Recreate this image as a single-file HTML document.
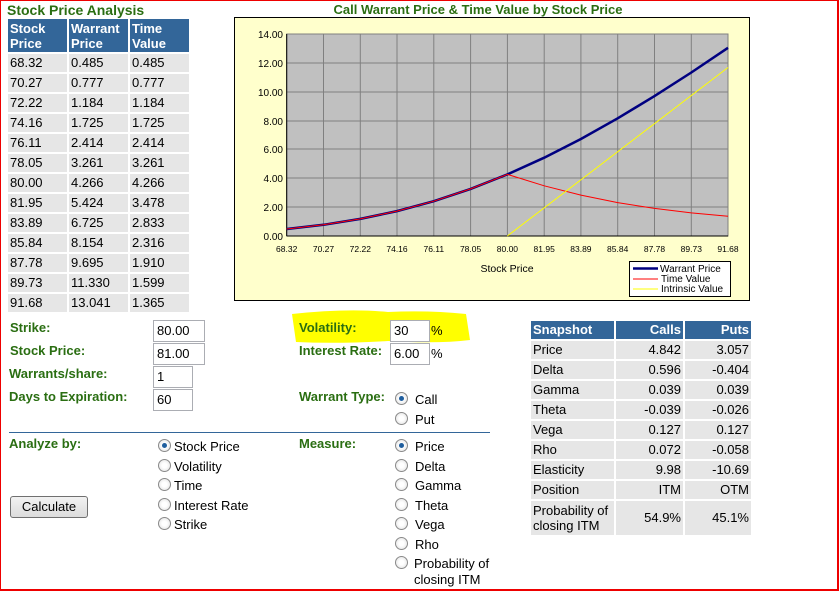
<!DOCTYPE html>
<html><head><meta charset="utf-8"><style>
*{margin:0;padding:0;box-sizing:border-box}
body{width:840px;height:591px;background:#fff;font-family:"Liberation Sans",Arial,sans-serif;font-size:13px;color:#000;position:relative;overflow:hidden}
.frame{position:absolute;left:0;top:0;width:839px;height:591px;border:1px solid #e00;border-right:2px solid #e00;border-bottom:2px solid #e00}
.a{position:absolute;white-space:nowrap}
.g{color:#2a6e12;font-weight:bold;font-size:13px}
.h{background:#336699;color:#fff;font-weight:bold;font-size:13px;line-height:15px;padding:2px 2px}
.c{background:#e6e6e6;font-size:13px;line-height:18px;padding-left:2px}
.inp{position:absolute;border:1px solid #abadb3;background:#fff;height:22px;font-size:13px;line-height:20px;padding-left:3px}
.rad{position:absolute;width:13px;height:13px;border-radius:50%;border:1px solid #8a8a8a;background:radial-gradient(circle,#fff 30%,#ddd 100%)}
.rad.on::after{content:"";position:absolute;left:3px;top:3px;width:5px;height:5px;border-radius:50%;background:#1f5e9e}
.r{text-align:right;padding-right:2px;padding-left:0}
</style></head><body>
<div class="frame"></div>
<div class="a g" style="left:7px;top:2px;font-size:14px">Stock Price Analysis</div>
<div class="a h" style="left:8px;top:19px;width:59px;height:33px">Stock<br>Price</div>
<div class="a h" style="left:69px;top:19px;width:59px;height:33px">Warrant<br>Price</div>
<div class="a h" style="left:130px;top:19px;width:59px;height:33px">Time<br>Value</div>
<div id="rows"></div>

<svg class="a" style="left:230px;top:0" width="524" height="305">
<text x="248" y="14" text-anchor="middle" font-family="Liberation Sans" font-weight="bold" font-size="13" fill="#2a6e12">Call Warrant Price &amp; Time Value by Stock Price</text>
<rect x="4.5" y="17.5" width="515" height="283" fill="#ffffcc" stroke="#000"/>
<rect x="56.7" y="34" width="441.3" height="202" fill="#c0c0c0" stroke="#808080"/>
<g stroke="#808080" stroke-width="1">
<line x1="56.7" y1="63" x2="498" y2="63"/><line x1="56.7" y1="92" x2="498" y2="92"/><line x1="56.7" y1="121" x2="498" y2="121"/><line x1="56.7" y1="149" x2="498" y2="149"/><line x1="56.7" y1="178" x2="498" y2="178"/><line x1="56.7" y1="207" x2="498" y2="207"/>
<line x1="93.5" y1="34" x2="93.5" y2="236"/><line x1="130.3" y1="34" x2="130.3" y2="236"/><line x1="167" y1="34" x2="167" y2="236"/><line x1="203.8" y1="34" x2="203.8" y2="236"/><line x1="240.6" y1="34" x2="240.6" y2="236"/><line x1="277.4" y1="34" x2="277.4" y2="236"/><line x1="314.2" y1="34" x2="314.2" y2="236"/><line x1="350.9" y1="34" x2="350.9" y2="236"/><line x1="387.7" y1="34" x2="387.7" y2="236"/><line x1="424.5" y1="34" x2="424.5" y2="236"/><line x1="461.3" y1="34" x2="461.3" y2="236"/>
</g>
<line x1="56.7" y1="34" x2="56.7" y2="236" stroke="#000"/><line x1="56.7" y1="236" x2="498" y2="236" stroke="#000"/>
<g font-family="Liberation Sans" font-size="10" text-anchor="end">
<text x="53" y="38">14.00</text><text x="53" y="67">12.00</text><text x="53" y="96">10.00</text><text x="53" y="125">8.00</text><text x="53" y="153">6.00</text><text x="53" y="182">4.00</text><text x="53" y="211">2.00</text><text x="53" y="240">0.00</text>
</g>
<g font-family="Liberation Sans" font-size="8.5" text-anchor="middle">
<text x="56.7" y="252">68.32</text><text x="93.5" y="252">70.27</text><text x="130.3" y="252">72.22</text><text x="167" y="252">74.16</text><text x="203.8" y="252">76.11</text><text x="240.6" y="252">78.05</text><text x="277.4" y="252">80.00</text><text x="314.2" y="252">81.95</text><text x="350.9" y="252">83.89</text><text x="387.7" y="252">85.84</text><text x="424.5" y="252">87.78</text><text x="461.3" y="252">89.73</text><text x="498" y="252">91.68</text>
</g>
<text x="277" y="272" text-anchor="middle" font-family="Liberation Sans" font-size="10.5">Stock Price</text>
<polyline fill="none" stroke="#000080" stroke-width="2.5" points="56.7,229 93.5,224.8 130.3,218.9 167,211.1 203.8,201.2 240.6,188.9 277.4,174.4 314.2,157.7 350.9,139 387.7,118.3 424.5,96.1 461.3,72.5 498,47.8"/>
<polyline fill="none" stroke="#ff0000" stroke-width="1" points="56.7,229 93.5,224.8 130.3,218.9 167,211.1 203.8,201.2 240.6,188.9 277.4,174.4 314.2,185.8 350.9,195.1 387.7,202.6 424.5,208.4 461.3,212.9 498,216.3"/>
<polyline fill="none" stroke="#ffff00" stroke-width="1" points="277.4,236 498,67.5"/>
<rect x="399.5" y="261.5" width="101" height="35" fill="#fff" stroke="#000"/>
<line x1="403" y1="268.5" x2="428" y2="268.5" stroke="#000080" stroke-width="2.5"/>
<line x1="403" y1="279" x2="428" y2="279" stroke="#f00"/>
<line x1="403" y1="289" x2="428" y2="289" stroke="#ff0"/>
<g font-family="Liberation Sans" font-size="10"><text x="430" y="272">Warrant Price</text><text x="431" y="282">Time Value</text><text x="431" y="292">Intrinsic Value</text></g>
</svg>

<svg class="a" style="left:288px;top:310px" width="185" height="36"><path d="M4 4 Q60 -2 100 2 Q140 0 178 4 L182 30 Q150 34 100 31 Q50 34 8 32 Z" fill="#ffff00"/></svg>

<div class="a g" style="left:10px;top:320px">Strike:</div>
<div class="a g" style="left:10px;top:343px">Stock Price:</div>
<div class="a g" style="left:9px;top:366px">Warrants/share:</div>
<div class="a g" style="left:9px;top:389px">Days to Expiration:</div>
<div class="inp" style="left:153px;top:320px;width:52px">80.00</div>
<div class="inp" style="left:153px;top:343px;width:52px">81.00</div>
<div class="inp" style="left:153px;top:366px;width:40px">1</div>
<div class="inp" style="left:153px;top:389px;width:40px">60</div>
<div class="a g" style="left:299px;top:320px">Volatility:</div>
<div class="a g" style="left:299px;top:343px">Interest Rate:</div>
<div class="inp" style="left:390px;top:320px;width:40px">30</div>
<div class="inp" style="left:390px;top:343px;width:40px">6.00</div>
<div class="a" style="left:431px;top:323px">%</div>
<div class="a" style="left:431px;top:346px">%</div>
<div class="a g" style="left:299px;top:389px">Warrant Type:</div>
<div class="rad on" style="left:395px;top:392px"></div><div class="a" style="left:415px;top:392px">Call</div>
<div class="rad" style="left:395px;top:412px"></div><div class="a" style="left:415px;top:412px">Put</div>
<div class="a" style="left:9px;top:432px;width:481px;height:1px;background:#336699"></div>
<div class="a g" style="left:9px;top:436px">Analyze by:</div>
<div class="rad on" style="left:158px;top:439px"></div><div class="a" style="left:174px;top:439px">Stock Price</div>
<div class="rad" style="left:158px;top:459px"></div><div class="a" style="left:174px;top:459px">Volatility</div>
<div class="rad" style="left:158px;top:478px"></div><div class="a" style="left:174px;top:478px">Time</div>
<div class="rad" style="left:158px;top:498px"></div><div class="a" style="left:174px;top:498px">Interest Rate</div>
<div class="rad" style="left:158px;top:517px"></div><div class="a" style="left:174px;top:517px">Strike</div>
<div class="a" style="left:10px;top:496px;width:78px;height:22px;border:1px solid #707070;border-radius:3px;background:linear-gradient(#f2f2f2,#dcdcdc);text-align:center;line-height:20px">Calculate</div>
<div class="a g" style="left:299px;top:436px">Measure:</div>
<div class="rad on" style="left:395px;top:439px"></div><div class="a" style="left:415px;top:439px">Price</div>
<div class="rad" style="left:395px;top:459px"></div><div class="a" style="left:415px;top:459px">Delta</div>
<div class="rad" style="left:395px;top:478px"></div><div class="a" style="left:415px;top:478px">Gamma</div>
<div class="rad" style="left:395px;top:498px"></div><div class="a" style="left:415px;top:498px">Theta</div>
<div class="rad" style="left:395px;top:517px"></div><div class="a" style="left:415px;top:517px">Vega</div>
<div class="rad" style="left:395px;top:537px"></div><div class="a" style="left:415px;top:537px">Rho</div>
<div class="rad" style="left:395px;top:556px"></div><div class="a" style="left:414px;top:556px;line-height:16px">Probability of<br>closing ITM</div>

<div class="a h" style="left:531px;top:321px;width:83px;height:18px;line-height:14px">Snapshot</div>
<div class="a h" style="left:616px;top:321px;width:67px;height:18px;line-height:14px;text-align:right">Calls</div>
<div class="a h" style="left:685px;top:321px;width:66px;height:18px;line-height:14px;text-align:right">Puts</div>
<div id="snap"></div>
<script>
var d=[["68.32","0.485","0.485"],["70.27","0.777","0.777"],["72.22","1.184","1.184"],["74.16","1.725","1.725"],["76.11","2.414","2.414"],["78.05","3.261","3.261"],["80.00","4.266","4.266"],["81.95","5.424","3.478"],["83.89","6.725","2.833"],["85.84","8.154","2.316"],["87.78","9.695","1.910"],["89.73","11.330","1.599"],["91.68","13.041","1.365"]];
var h="";d.forEach(function(r,i){var y=54+i*20;h+='<div class="a c" style="left:8px;top:'+y+'px;width:59px">'+r[0]+'</div><div class="a c" style="left:69px;top:'+y+'px;width:59px">'+r[1]+'</div><div class="a c" style="left:130px;top:'+y+'px;width:59px">'+r[2]+'</div>';});
document.getElementById("rows").innerHTML=h;
var s=[["Price","4.842","3.057"],["Delta","0.596","-0.404"],["Gamma","0.039","0.039"],["Theta","-0.039","-0.026"],["Vega","0.127","0.127"],["Rho","0.072","-0.058"],["Elasticity","9.98","-10.69"],["Position","ITM","OTM"]];
h="";s.forEach(function(r,i){var y=341+i*20;h+='<div class="a c" style="left:531px;top:'+y+'px;width:83px">'+r[0]+'</div><div class="a c r" style="left:616px;top:'+y+'px;width:67px">'+r[1]+'</div><div class="a c r" style="left:685px;top:'+y+'px;width:66px">'+r[2]+'</div>';});
h+='<div class="a c" style="left:531px;top:501px;width:83px;height:34px;line-height:15px;padding-top:2px">Probability of<br>closing ITM</div><div class="a c r" style="left:616px;top:501px;width:67px;height:34px;line-height:34px">54.9%</div><div class="a c r" style="left:685px;top:501px;width:66px;height:34px;line-height:34px">45.1%</div>';
document.getElementById("snap").innerHTML=h;
</script>
</body></html>
